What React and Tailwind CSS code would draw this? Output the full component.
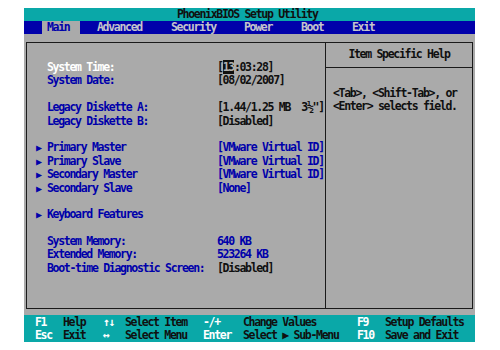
const rows = [
  { label: 'System Time:', value: 'time', labelColor: 'text-white', valueColor: 'text-[#101010]' },
  { label: 'System Date:', value: '[08/02/2007]', valueColor: 'text-[#101010]' },
  null,
  { label: 'Legacy Diskette A:', value: '[1.44/1.25 MB  3½"]', valueColor: 'text-[#101010]' },
  { label: 'Legacy Diskette B:', value: '[Disabled]', valueColor: 'text-[#101010]' },
  null,
  { label: 'Primary Master', value: '[VMware Virtual ID]', arrow: true },
  { label: 'Primary Slave', value: '[VMware Virtual ID]', arrow: true },
  { label: 'Secondary Master', value: '[VMware Virtual ID]', arrow: true },
  { label: 'Secondary Slave', value: '[None]', arrow: true },
  null,
  { label: 'Keyboard Features', value: '', arrow: true },
  null,
  { label: 'System Memory:', value: '640 KB' },
  { label: 'Extended Memory:', value: '523264 KB' },
  { label: 'Boot-time Diagnostic Screen:', value: '[Disabled]', valueColor: 'text-[#101010]' },
];

const footer = [
  [['F1', 'Help'], ['↑↓', 'Select Item'], ['-/+', 'Change Values'], ['F9', 'Setup Defaults']],
  [['Esc', 'Exit'], ['↔', 'Select Menu'], ['Enter', 'Select ▶ Sub-Menu'], ['F10', 'Save and Exit']],
];

function Row({ row }) {
  if (!row) return <div className="h-[13.4px]" />;
  return (
    <div className="flex h-[13.4px] items-center">
      <span className="w-[11px] text-[10px] tracking-normal text-[#0000aa]">{row.arrow ? '▶' : ''}</span>
      <span className={`w-[170px] whitespace-pre ${row.labelColor || 'text-[#0000aa]'}`}>{row.label}</span>
      <span className={`whitespace-pre ${row.valueColor || 'text-[#0000aa]'}`}>
        {row.value === 'time' ? (
          <>
            [<span className="bg-[#101010] text-[#b0b0b0]">13</span>:03:28]
          </>
        ) : (
          row.value
        )}
      </span>
    </div>
  );
}

function App() {
  return (
    <div
      className="w-[500px] h-[350px] bg-white pt-[8px] pl-[24px] font-bold text-[11.5px] leading-[13.4px] tracking-[-1.3px]"
      style={{ fontFamily: '"DejaVu Sans Mono", "Liberation Mono", monospace' }}
    >
      <div className="w-[451px] h-[334px] bg-[#aaaaaa] flex flex-col">
        {/* title */}
        <div className="h-[13px] bg-[#0aa8a8] text-[#101010] pl-[153px] flex items-center whitespace-pre">
          PhoenixBIOS Setup Utility
        </div>

        {/* menu bar */}
        <div className="h-[13px] bg-[#0000aa] text-[#c4c4cc] flex items-center whitespace-pre">
          <span className="ml-[18px] w-[38px] h-full bg-[#aaaaaa] text-[#0000aa] pl-[5px] flex items-center">Main</span>
          <span className="ml-[17px] w-[74px]">Advanced</span>
          <span className="w-[73px]">Security</span>
          <span className="w-[57px]">Power</span>
          <span className="w-[51px]">Boot</span>
          <span>Exit</span>
        </div>

        {/* frame */}
        <div className="mt-[8px] mx-[2px] h-[268px] border border-[#1a1a1a] flex">
          <div className="w-[299px] pl-[9px] pt-[18px] border-r border-[#1a1a1a]">
            {rows.map((row, i) => (
              <Row key={i} row={row} />
            ))}
          </div>
          <div className="flex-1 flex flex-col text-[#101010]">
            <div className="h-[25px] border-b border-[#1a1a1a] flex items-center justify-center whitespace-pre">
              Item Specific Help
            </div>
            <div className="pl-[7px] pt-[19px] whitespace-pre">
              <div>&lt;Tab&gt;, &lt;Shift-Tab&gt;, or</div>
              <div>&lt;Enter&gt; selects field.</div>
            </div>
          </div>
        </div>

        {/* footer */}
        <div className="mt-[6px] h-[27px] bg-[#0aa8a8] pt-[1px]">
          {footer.map((line, i) => (
            <div key={i} className="flex h-[13.4px] items-center whitespace-pre">
              <span className="ml-[11px] w-[28px] text-white">{line[0][0]}</span>
              <span className="w-[40px] text-[#101010]">{line[0][1]}</span>
              <span className="w-[22px] text-white">{line[1][0]}</span>
              <span className="w-[78px] text-[#101010]">{line[1][1]}</span>
              <span className="w-[40px] text-white">{line[2][0]}</span>
              <span className="w-[114px] text-[#101010]">{line[2][1]}</span>
              <span className="w-[28px] text-white">{line[3][0]}</span>
              <span className="text-[#101010]">{line[3][1]}</span>
            </div>
          ))}
        </div>
      </div>
    </div>
  );
}

export default App;
